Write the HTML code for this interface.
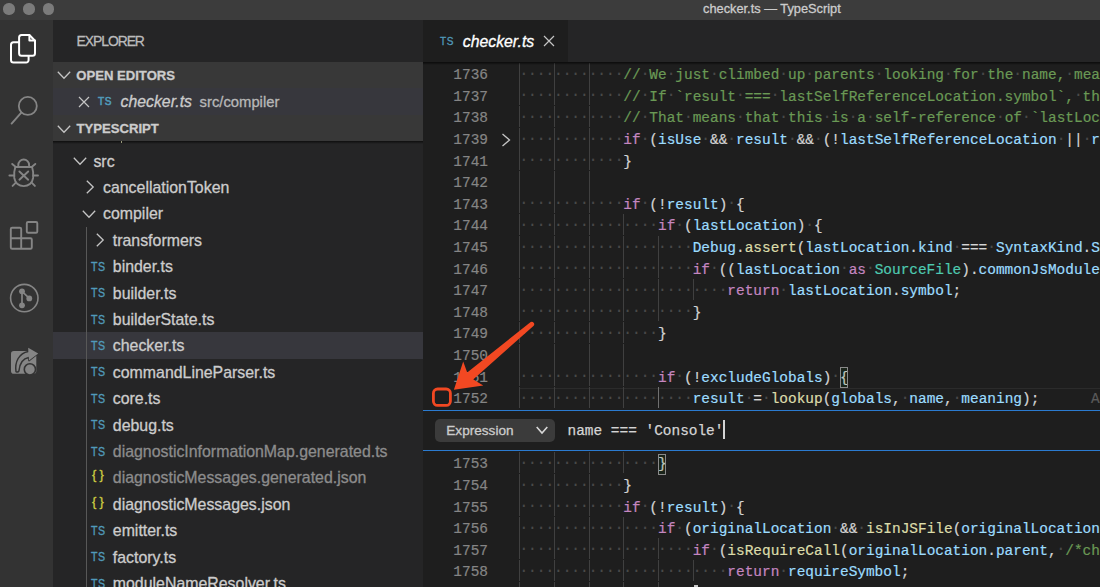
<!DOCTYPE html>
<html><head><meta charset="utf-8"><style>
*{box-sizing:border-box}
html,body{margin:0;padding:0}
body{width:1100px;height:587px;overflow:hidden;position:relative;background:#1e1e1e;font-family:"Liberation Sans",sans-serif}
.a{position:absolute}
.t{position:absolute;white-space:pre;line-height:1;-webkit-text-stroke:0.3px currentColor}
.code{position:absolute;white-space:pre;-webkit-text-stroke:0.2px currentColor;font-family:"Liberation Mono",monospace;font-size:14.45px;line-height:21.6px;height:21.6px;color:#d4d4d4}
.ln{position:absolute;white-space:pre;-webkit-text-stroke:0.2px currentColor;font-family:"Liberation Mono",monospace;font-size:14.45px;line-height:21.6px;color:#858585;text-align:right;width:60px}
.ws{color:#4a4a4a;position:relative;top:-1.4px}
.c{color:#6a9955}
.k{color:#c586c0}
.v{color:#9cdcfe}
.f{color:#dcdcaa}
.ty{color:#4ec9b0}
.p{color:#d4d4d4}
.g{position:absolute;width:1px;background:#404040}
</style></head><body>
<div class="a" style="left:0;top:0;width:1100px;height:20px;background:#3c3c3c"></div>
<div class="a" style="left:3.4px;top:3.4px;width:11.2px;height:11.2px;border-radius:50%;background:#7b7b7b"></div>
<div class="a" style="left:23.4px;top:3.4px;width:11.2px;height:11.2px;border-radius:50%;background:#7b7b7b"></div>
<div class="a" style="left:43.3px;top:3.4px;width:11.2px;height:11.2px;border-radius:50%;background:#7b7b7b"></div>
<div class="t" style="left:703px;top:3px;font-size:12.8px;color:#cccccc">checker.ts — TypeScript</div>
<div class="a" style="left:0;top:20px;width:53px;height:567px;background:#333333"></div>
<svg class="a" style="left:0;top:0" width="53" height="587" viewBox="0 0 53 587" fill="none" stroke-linejoin="round" stroke-linecap="round">
<!-- explorer -->
<path d="M19.1 37.5 a2.5 2.5 0 0 1 2.5-2.5 h7.8 l5.6 5.8 v12.5 a2.5 2.5 0 0 1 -2.5 2.5 h-10.9 a2.5 2.5 0 0 1 -2.5-2.5 z" stroke="#ffffff" stroke-width="2"/>
<path d="M29.4 35.2 v5.4 h5.5" stroke="#ffffff" stroke-width="2"/>
<path d="M19 42.3 h-5.5 a2.5 2.5 0 0 0 -2.5 2.5 v15.3 a2.5 2.5 0 0 0 2.5 2.5 h12.6 a2.5 2.5 0 0 0 2.5-2.5 v-4.2" stroke="#ffffff" stroke-width="2"/>
<!-- search -->
<circle cx="27.8" cy="105.9" r="9.0" stroke="#858585" stroke-width="1.8"/>
<path d="M21.3 112.6 L11.6 123.6" stroke="#858585" stroke-width="1.9"/>
<!-- debug -->
<path d="M18.3 166.8 V164.9 a5.4 5.4 0 0 1 10.8 0 V166.8" stroke="#858585" stroke-width="1.9"/>
<path d="M15.3 167 H32.1 C33.4 171 33.5 175 33.1 178 C32.3 183 28.6 186.1 23.7 186.1 C18.8 186.1 15.1 183 14.3 178 C13.9 175 14 171 15.3 167 Z" stroke="#858585" stroke-width="1.9"/>
<path d="M19.4 171.5 l8.8 8.2 M28.2 171.5 l-8.8 8.2" stroke="#858585" stroke-width="1.9"/>
<path d="M12.2 163.9 l3.6 3 M35.3 163.9 l-3.6 3 M9.4 175.5 h4.6 M33.4 175.5 h4.6 M12.6 185.9 l3.5 -3.5 M34.9 185.9 l-3.5 -3.5" stroke="#858585" stroke-width="1.9"/>
<!-- extensions -->
<path d="M10.8 238.2 V229 a1.3 1.3 0 0 1 1.3-1.3 h7.8 a1.3 1.3 0 0 1 1.3 1.3 V238.2 Z M10.8 238.2 h10.4 v10.6 h-9.1 a1.3 1.3 0 0 1 -1.3-1.3 Z M21.2 238.2 h9.3 a1.3 1.3 0 0 1 1.3 1.3 v8 a1.3 1.3 0 0 1 -1.3 1.3 h-9.3 Z" stroke="#858585" stroke-width="1.9"/>
<rect x="26.8" y="222" width="10.5" height="10.7" rx="1.3" stroke="#858585" stroke-width="1.9"/>
<!-- git -->
<circle cx="24.3" cy="298.1" r="13.7" stroke="#858585" stroke-width="1.6"/>
<path d="M22 291.3 V305.3 M22 291.3 L29.3 298.4" stroke="#858585" stroke-width="1.7"/>
<circle cx="22" cy="291.3" r="2.9" fill="#858585"/>
<circle cx="29.3" cy="298.4" r="2.9" fill="#858585"/>
<circle cx="22" cy="305.3" r="2.9" fill="#858585"/>
<!-- live share -->
<rect x="11" y="350.9" width="25.3" height="22.8" rx="2.8" fill="#858585"/>
<path d="M16.0 371.6 C14.6 362 19 353 28.3 351.4 L28.2 347.8 L38.2 353.4 L29 360.6 L28.8 357.6 C23 358.6 19.6 364 18.9 371 Q17.6 372.8 16.0 371.6 Z" fill="#858585" stroke="#333333" stroke-width="1.5" stroke-linejoin="round"/>
<path d="M28.2 347.8 L38.2 353.4 L29 360.6 L28.8 357.6 L28.3 351.4 Z" fill="#858585"/>
<circle cx="29.9" cy="369.4" r="5.6" fill="#858585" stroke="#333333" stroke-width="1.6"/>
</svg>
<div class="a" style="left:53px;top:20px;width:370px;height:567px;background:#252526"></div>
<div class="t" style="left:76.60px;top:35.33px;font-size:13.9px;color:#bbbbbb;letter-spacing:-1.05px">EXPLORER</div>
<div class="a" style="left:53px;top:62px;width:370px;height:79.2px;background:#383838"></div>
<div class="a" style="left:53px;top:88.4px;width:370px;height:26.4px;background:#37373d"></div>
<svg class="a" style="left:55.8px;top:67.4px" width="16" height="16" viewBox="0 0 16 16"><path d="M1.7999999999999998 4.8 L8 11.2 L14.2 4.8" fill="none" stroke="#c5c5c5" stroke-width="1.3"/></svg>
<div class="t" style="left:76.30px;top:68.91px;font-size:13.1px;color:#cccccc;font-weight:bold">OPEN EDITORS</div>
<svg class="a" style="left:78px;top:95.5px" width="12" height="12" viewBox="0 0 12 12"><path d="M1 1 L11 11 M11 1 L1 11" stroke="#c5c5c5" stroke-width="1.2"/></svg>
<div class="t" style="left:97.80px;top:95.89px;font-size:10.8px;color:#519aba;letter-spacing:0.6px;-webkit-text-stroke:0.6px #519aba;transform:scaleX(0.93);transform-origin:0 0">TS</div>
<div class="t" style="left:120.60px;top:93.93px;font-size:15.8px;color:#cccccc;font-style:italic">checker.ts</div>
<div class="t" style="left:199.60px;top:95.47px;font-size:14.8px;color:#b8b8b8;">src/compiler</div>
<svg class="a" style="left:55.8px;top:120.5px" width="16" height="16" viewBox="0 0 16 16"><path d="M1.7999999999999998 4.8 L8 11.2 L14.2 4.8" fill="none" stroke="#c5c5c5" stroke-width="1.3"/></svg>
<div class="t" style="left:76.60px;top:122.11px;font-size:13.1px;color:#cccccc;font-weight:bold">TYPESCRIPT</div>
<div class="a" style="left:53px;top:141.2px;width:370px;height:446px;overflow:hidden"><div class="a" style="left:-53px;top:-141.2px;width:423px;height:600px"><svg class="a" style="left:71.80000000000001px;top:153.4px" width="16" height="16" viewBox="0 0 16 16"><path d="M1.7999999999999998 4.8 L8 11.2 L14.2 4.8" fill="none" stroke="#c5c5c5" stroke-width="1.3"/></svg>
<div class="t" style="left:93.40px;top:153.54px;font-size:15.9px;color:#cccccc;">src</div>
<svg class="a" style="left:82.1px;top:179.0px" width="16" height="16" viewBox="0 0 16 16"><path d="M4.8 1.7999999999999998 L11.2 8 L4.8 14.2" fill="none" stroke="#c5c5c5" stroke-width="1.3"/></svg>
<div class="t" style="left:103.00px;top:179.94px;font-size:15.9px;color:#cccccc;">cancellationToken</div>
<svg class="a" style="left:81.4px;top:206.2px" width="16" height="16" viewBox="0 0 16 16"><path d="M1.7999999999999998 4.8 L8 11.2 L14.2 4.8" fill="none" stroke="#c5c5c5" stroke-width="1.3"/></svg>
<div class="t" style="left:103.00px;top:206.34px;font-size:15.9px;color:#cccccc;">compiler</div>
<svg class="a" style="left:91.89999999999999px;top:231.79999999999998px" width="16" height="16" viewBox="0 0 16 16"><path d="M4.8 1.7999999999999998 L11.2 8 L4.8 14.2" fill="none" stroke="#c5c5c5" stroke-width="1.3"/></svg>
<div class="t" style="left:112.80px;top:232.74px;font-size:15.9px;color:#cccccc;">transformers</div>
<div class="t" style="left:91.40px;top:260.87px;font-size:12.5px;color:#519aba;letter-spacing:0.6px;-webkit-text-stroke:0.35px #519aba;transform:scaleX(0.85);transform-origin:0 0">TS</div>
<div class="t" style="left:112.80px;top:259.14px;font-size:15.9px;color:#cccccc;">binder.ts</div>
<div class="t" style="left:91.40px;top:287.27px;font-size:12.5px;color:#519aba;letter-spacing:0.6px;-webkit-text-stroke:0.35px #519aba;transform:scaleX(0.85);transform-origin:0 0">TS</div>
<div class="t" style="left:112.80px;top:285.54px;font-size:15.9px;color:#cccccc;">builder.ts</div>
<div class="t" style="left:91.40px;top:313.67px;font-size:12.5px;color:#519aba;letter-spacing:0.6px;-webkit-text-stroke:0.35px #519aba;transform:scaleX(0.85);transform-origin:0 0">TS</div>
<div class="t" style="left:112.80px;top:311.94px;font-size:15.9px;color:#cccccc;">builderState.ts</div>
<div class="a" style="left:53px;top:332.40px;width:370px;height:26.4px;background:#37373d"></div>
<div class="t" style="left:91.40px;top:340.07px;font-size:12.5px;color:#519aba;letter-spacing:0.6px;-webkit-text-stroke:0.35px #519aba;transform:scaleX(0.85);transform-origin:0 0">TS</div>
<div class="t" style="left:112.80px;top:338.34px;font-size:15.9px;color:#cccccc;">checker.ts</div>
<div class="t" style="left:91.40px;top:366.47px;font-size:12.5px;color:#519aba;letter-spacing:0.6px;-webkit-text-stroke:0.35px #519aba;transform:scaleX(0.85);transform-origin:0 0">TS</div>
<div class="t" style="left:112.80px;top:364.74px;font-size:15.9px;color:#cccccc;">commandLineParser.ts</div>
<div class="t" style="left:91.40px;top:392.87px;font-size:12.5px;color:#519aba;letter-spacing:0.6px;-webkit-text-stroke:0.35px #519aba;transform:scaleX(0.85);transform-origin:0 0">TS</div>
<div class="t" style="left:112.80px;top:391.14px;font-size:15.9px;color:#cccccc;">core.ts</div>
<div class="t" style="left:91.40px;top:419.27px;font-size:12.5px;color:#519aba;letter-spacing:0.6px;-webkit-text-stroke:0.35px #519aba;transform:scaleX(0.85);transform-origin:0 0">TS</div>
<div class="t" style="left:112.80px;top:417.54px;font-size:15.9px;color:#cccccc;">debug.ts</div>
<div class="t" style="left:91.40px;top:445.67px;font-size:12.5px;color:#519aba;letter-spacing:0.6px;-webkit-text-stroke:0.35px #519aba;transform:scaleX(0.85);transform-origin:0 0">TS</div>
<div class="t" style="left:112.80px;top:443.94px;font-size:15.9px;color:#8c8c8c;">diagnosticInformationMap.generated.ts</div>
<div class="t" style="left:91.9px;top:469.4px;font-size:12.8px;color:#cbcb41;letter-spacing:3.3px;-webkit-text-stroke:0.35px #cbcb41">{}</div>
<div class="t" style="left:112.80px;top:470.34px;font-size:15.9px;color:#8c8c8c;">diagnosticMessages.generated.json</div>
<div class="t" style="left:91.9px;top:495.79999999999995px;font-size:12.8px;color:#cbcb41;letter-spacing:3.3px;-webkit-text-stroke:0.35px #cbcb41">{}</div>
<div class="t" style="left:112.80px;top:496.74px;font-size:15.9px;color:#cccccc;">diagnosticMessages.json</div>
<div class="t" style="left:91.40px;top:524.87px;font-size:12.5px;color:#519aba;letter-spacing:0.6px;-webkit-text-stroke:0.35px #519aba;transform:scaleX(0.85);transform-origin:0 0">TS</div>
<div class="t" style="left:112.80px;top:523.14px;font-size:15.9px;color:#cccccc;">emitter.ts</div>
<div class="t" style="left:91.40px;top:551.27px;font-size:12.5px;color:#519aba;letter-spacing:0.6px;-webkit-text-stroke:0.35px #519aba;transform:scaleX(0.85);transform-origin:0 0">TS</div>
<div class="t" style="left:112.80px;top:549.54px;font-size:15.9px;color:#cccccc;">factory.ts</div>
<div class="t" style="left:91.40px;top:577.67px;font-size:12.5px;color:#519aba;letter-spacing:0.6px;-webkit-text-stroke:0.35px #519aba;transform:scaleX(0.85);transform-origin:0 0">TS</div>
<div class="t" style="left:112.80px;top:575.94px;font-size:15.9px;color:#cccccc;">moduleNameResolver.ts</div>
<div class="a" style="left:86px;top:226.8px;width:1px;height:370px;background:#585858"></div></div></div>
<div class="a" style="left:53px;top:141.2px;width:370px;height:3px;background:linear-gradient(#000000a0,#00000000)"></div>
<div class="a" style="left:120.8px;top:141.3px;width:1.2px;height:1.6px;background:#9a9a7a"></div>
<div class="a" style="left:423px;top:20px;width:677px;height:42px;background:#252526"></div>
<div class="a" style="left:423px;top:20px;width:145px;height:42px;background:#1e1e1e"></div>
<div class="t" style="left:440.20px;top:36.06px;font-size:11.8px;color:#519aba;letter-spacing:0.6px;-webkit-text-stroke:0.35px #519aba;transform:scaleX(0.85);transform-origin:0 0">TS</div>
<div class="t" style="left:462.80px;top:34.13px;font-size:15.8px;color:#ffffff;font-style:italic">checker.ts</div>
<svg class="a" style="left:542.5px;top:34.5px" width="12" height="12" viewBox="0 0 12 12"><path d="M1 1 L11 11 M11 1 L1 11" stroke="#c5c5c5" stroke-width="1.2"/></svg>
<div class="a" style="left:423px;top:62px;width:677px;height:525px;background:#1e1e1e;overflow:hidden">
<div class="a" style="left:-423px;top:-62px;width:1100px;height:587px">
<div class="a" style="left:519px;top:387.80px;width:600px;height:21.4px;border-top:1.6px solid #2b2b2b;border-bottom:1.6px solid #2b2b2b"></div>
<div class="ln" style="left:428px;top:65.10px">1736</div>
<div class="g" style="left:519.40px;top:62.80px;height:21.00px;background:#404040"></div>
<div class="g" style="left:554.08px;top:62.80px;height:21.00px;background:#404040"></div>
<div class="g" style="left:588.76px;top:62.80px;height:21.00px;background:#404040"></div>
<div class="code" style="left:519.4px;top:65.10px"><span class="ws">············</span><span class="c">//</span><span class="ws">·</span><span class="c">We</span><span class="ws">·</span><span class="c">just</span><span class="ws">·</span><span class="c">climbed</span><span class="ws">·</span><span class="c">up</span><span class="ws">·</span><span class="c">parents</span><span class="ws">·</span><span class="c">looking</span><span class="ws">·</span><span class="c">for</span><span class="ws">·</span><span class="c">the</span><span class="ws">·</span><span class="c">name,</span><span class="ws">·</span><span class="c">meaning,</span><span class="ws">·</span><span class="c">and</span><span class="ws">·</span><span class="c">namespace</span></div>
<div class="ln" style="left:428px;top:86.70px">1737</div>
<div class="g" style="left:519.40px;top:84.40px;height:21.00px;background:#404040"></div>
<div class="g" style="left:554.08px;top:84.40px;height:21.00px;background:#404040"></div>
<div class="g" style="left:588.76px;top:84.40px;height:21.00px;background:#404040"></div>
<div class="code" style="left:519.4px;top:86.70px"><span class="ws">············</span><span class="c">//</span><span class="ws">·</span><span class="c">If</span><span class="ws">·</span><span class="c">`result</span><span class="ws">·</span><span class="c">===</span><span class="ws">·</span><span class="c">lastSelfReferenceLocation.symbol`,</span><span class="ws">·</span><span class="c">that</span><span class="ws">·</span><span class="c">means</span><span class="ws">·</span><span class="c">that</span><span class="ws">·</span><span class="c">we</span><span class="ws">·</span><span class="c">are</span><span class="ws">·</span><span class="c">somewhere</span><span class="ws">·</span><span class="c">inside</span></div>
<div class="ln" style="left:428px;top:108.30px">1738</div>
<div class="g" style="left:519.40px;top:106.00px;height:21.00px;background:#404040"></div>
<div class="g" style="left:554.08px;top:106.00px;height:21.00px;background:#404040"></div>
<div class="g" style="left:588.76px;top:106.00px;height:21.00px;background:#404040"></div>
<div class="code" style="left:519.4px;top:108.30px"><span class="ws">············</span><span class="c">//</span><span class="ws">·</span><span class="c">That</span><span class="ws">·</span><span class="c">means</span><span class="ws">·</span><span class="c">that</span><span class="ws">·</span><span class="c">this</span><span class="ws">·</span><span class="c">is</span><span class="ws">·</span><span class="c">a</span><span class="ws">·</span><span class="c">self-reference</span><span class="ws">·</span><span class="c">of</span><span class="ws">·</span><span class="c">`lastLocation`,</span><span class="ws">·</span><span class="c">and</span><span class="ws">·</span><span class="c">shouldn&#x27;t</span><span class="ws">·</span><span class="c">count</span><span class="ws">·</span><span class="c">this</span></div>
<div class="ln" style="left:428px;top:129.90px">1739</div>
<div class="g" style="left:519.40px;top:127.60px;height:21.00px;background:#404040"></div>
<div class="g" style="left:554.08px;top:127.60px;height:21.00px;background:#404040"></div>
<div class="g" style="left:588.76px;top:127.60px;height:21.00px;background:#404040"></div>
<div class="code" style="left:519.4px;top:129.90px"><span class="ws">············</span><span class="k">if</span><span class="ws">·</span><span class="p">(</span><span class="v">isUse</span><span class="ws">·</span><span class="p">&amp;&amp;</span><span class="ws">·</span><span class="v">result</span><span class="ws">·</span><span class="p">&amp;&amp;</span><span class="ws">·</span><span class="p">(!</span><span class="v">lastSelfReferenceLocation</span><span class="ws">·</span><span class="p">||</span><span class="ws">·</span><span class="v">result</span><span class="ws">·</span><span class="p">!==</span><span class="ws">·</span></div>
<div class="ln" style="left:428px;top:151.50px">1741</div>
<div class="g" style="left:519.40px;top:149.20px;height:21.00px;background:#404040"></div>
<div class="g" style="left:554.08px;top:149.20px;height:21.00px;background:#404040"></div>
<div class="g" style="left:588.76px;top:149.20px;height:21.00px;background:#404040"></div>
<div class="code" style="left:519.4px;top:151.50px"><span class="ws">············</span><span class="p">}</span></div>
<div class="ln" style="left:428px;top:173.10px">1742</div>
<div class="g" style="left:519.40px;top:170.80px;height:21.00px;background:#404040"></div>
<div class="g" style="left:554.08px;top:170.80px;height:21.00px;background:#404040"></div>
<div class="g" style="left:588.76px;top:170.80px;height:21.00px;background:#404040"></div>
<div class="code" style="left:519.4px;top:173.10px"></div>
<div class="ln" style="left:428px;top:194.70px">1743</div>
<div class="g" style="left:519.40px;top:192.40px;height:21.00px;background:#404040"></div>
<div class="g" style="left:554.08px;top:192.40px;height:21.00px;background:#404040"></div>
<div class="g" style="left:588.76px;top:192.40px;height:21.00px;background:#404040"></div>
<div class="code" style="left:519.4px;top:194.70px"><span class="ws">············</span><span class="k">if</span><span class="ws">·</span><span class="p">(!</span><span class="v">result</span><span class="p">)</span><span class="ws">·</span><span class="p">{</span></div>
<div class="ln" style="left:428px;top:216.30px">1744</div>
<div class="g" style="left:519.40px;top:214.00px;height:21.00px;background:#404040"></div>
<div class="g" style="left:554.08px;top:214.00px;height:21.00px;background:#404040"></div>
<div class="g" style="left:588.76px;top:214.00px;height:21.00px;background:#404040"></div>
<div class="g" style="left:623.44px;top:214.00px;height:21.00px;background:#404040"></div>
<div class="code" style="left:519.4px;top:216.30px"><span class="ws">················</span><span class="k">if</span><span class="ws">·</span><span class="p">(</span><span class="v">lastLocation</span><span class="p">)</span><span class="ws">·</span><span class="p">{</span></div>
<div class="ln" style="left:428px;top:237.90px">1745</div>
<div class="g" style="left:519.40px;top:235.60px;height:21.00px;background:#404040"></div>
<div class="g" style="left:554.08px;top:235.60px;height:21.00px;background:#404040"></div>
<div class="g" style="left:588.76px;top:235.60px;height:21.00px;background:#404040"></div>
<div class="g" style="left:623.44px;top:235.60px;height:21.00px;background:#404040"></div>
<div class="g" style="left:658.12px;top:235.60px;height:21.00px;background:#404040"></div>
<div class="code" style="left:519.4px;top:237.90px"><span class="ws">····················</span><span class="v">Debug</span><span class="p">.</span><span class="f">assert</span><span class="p">(</span><span class="v">lastLocation</span><span class="p">.</span><span class="v">kind</span><span class="ws">·</span><span class="p">===</span><span class="ws">·</span><span class="v">SyntaxKind</span><span class="p">.</span><span class="v">SourceFile</span></div>
<div class="ln" style="left:428px;top:259.50px">1746</div>
<div class="g" style="left:519.40px;top:257.20px;height:21.00px;background:#404040"></div>
<div class="g" style="left:554.08px;top:257.20px;height:21.00px;background:#404040"></div>
<div class="g" style="left:588.76px;top:257.20px;height:21.00px;background:#404040"></div>
<div class="g" style="left:623.44px;top:257.20px;height:21.00px;background:#404040"></div>
<div class="g" style="left:658.12px;top:257.20px;height:21.00px;background:#404040"></div>
<div class="code" style="left:519.4px;top:259.50px"><span class="ws">····················</span><span class="k">if</span><span class="ws">·</span><span class="p">((</span><span class="v">lastLocation</span><span class="ws">·</span><span class="k">as</span><span class="ws">·</span><span class="ty">SourceFile</span><span class="p">).</span><span class="v">commonJsModuleIndicator</span></div>
<div class="ln" style="left:428px;top:281.10px">1747</div>
<div class="g" style="left:519.40px;top:278.80px;height:21.00px;background:#404040"></div>
<div class="g" style="left:554.08px;top:278.80px;height:21.00px;background:#404040"></div>
<div class="g" style="left:588.76px;top:278.80px;height:21.00px;background:#404040"></div>
<div class="g" style="left:623.44px;top:278.80px;height:21.00px;background:#404040"></div>
<div class="g" style="left:658.12px;top:278.80px;height:21.00px;background:#404040"></div>
<div class="g" style="left:692.80px;top:278.80px;height:21.00px;background:#404040"></div>
<div class="code" style="left:519.4px;top:281.10px"><span class="ws">························</span><span class="k">return</span><span class="ws">·</span><span class="v">lastLocation</span><span class="p">.</span><span class="v">symbol</span><span class="p">;</span></div>
<div class="ln" style="left:428px;top:302.70px">1748</div>
<div class="g" style="left:519.40px;top:300.40px;height:21.00px;background:#404040"></div>
<div class="g" style="left:554.08px;top:300.40px;height:21.00px;background:#404040"></div>
<div class="g" style="left:588.76px;top:300.40px;height:21.00px;background:#404040"></div>
<div class="g" style="left:623.44px;top:300.40px;height:21.00px;background:#404040"></div>
<div class="g" style="left:658.12px;top:300.40px;height:21.00px;background:#404040"></div>
<div class="code" style="left:519.4px;top:302.70px"><span class="ws">····················</span><span class="p">}</span></div>
<div class="ln" style="left:428px;top:324.30px">1749</div>
<div class="g" style="left:519.40px;top:322.00px;height:21.00px;background:#404040"></div>
<div class="g" style="left:554.08px;top:322.00px;height:21.00px;background:#404040"></div>
<div class="g" style="left:588.76px;top:322.00px;height:21.00px;background:#404040"></div>
<div class="g" style="left:623.44px;top:322.00px;height:21.00px;background:#404040"></div>
<div class="code" style="left:519.4px;top:324.30px"><span class="ws">················</span><span class="p">}</span></div>
<div class="ln" style="left:428px;top:345.90px">1750</div>
<div class="g" style="left:519.40px;top:343.60px;height:21.00px;background:#404040"></div>
<div class="g" style="left:554.08px;top:343.60px;height:21.00px;background:#404040"></div>
<div class="g" style="left:588.76px;top:343.60px;height:21.00px;background:#404040"></div>
<div class="g" style="left:623.44px;top:343.60px;height:21.00px;background:#404040"></div>
<div class="code" style="left:519.4px;top:345.90px"></div>
<div class="ln" style="left:428px;top:367.50px">1751</div>
<div class="g" style="left:519.40px;top:365.20px;height:21.00px;background:#404040"></div>
<div class="g" style="left:554.08px;top:365.20px;height:21.00px;background:#404040"></div>
<div class="g" style="left:588.76px;top:365.20px;height:21.00px;background:#404040"></div>
<div class="g" style="left:623.44px;top:365.20px;height:21.00px;background:#404040"></div>
<div class="code" style="left:519.4px;top:367.50px"><span class="ws">················</span><span class="k">if</span><span class="ws">·</span><span class="p">(!</span><span class="v">excludeGlobals</span><span class="p">)</span><span class="ws">·</span><span class="bm">{</span></div>
<div class="ln" style="left:428px;top:389.10px">1752</div>
<div class="g" style="left:519.40px;top:386.80px;height:21.00px;background:#404040"></div>
<div class="g" style="left:554.08px;top:386.80px;height:21.00px;background:#404040"></div>
<div class="g" style="left:588.76px;top:386.80px;height:21.00px;background:#404040"></div>
<div class="g" style="left:623.44px;top:386.80px;height:21.00px;background:#404040"></div>
<div class="g" style="left:658.12px;top:386.80px;height:21.00px;background:#707070"></div>
<div class="code" style="left:519.4px;top:389.10px"><span class="ws">····················</span><span class="v">result</span><span class="ws">·</span><span class="p">=</span><span class="ws">·</span><span class="f">lookup</span><span class="p">(</span><span class="v">globals</span><span class="p">,</span><span class="ws">·</span><span class="v">name</span><span class="p">,</span><span class="ws">·</span><span class="v">meaning</span><span class="p">);</span></div>
<div class="ln" style="left:428px;top:454.30px">1753</div>
<div class="g" style="left:519.40px;top:452.00px;height:21.00px;background:#404040"></div>
<div class="g" style="left:554.08px;top:452.00px;height:21.00px;background:#404040"></div>
<div class="g" style="left:588.76px;top:452.00px;height:21.00px;background:#404040"></div>
<div class="g" style="left:623.44px;top:452.00px;height:21.00px;background:#404040"></div>
<div class="code" style="left:519.4px;top:454.30px"><span class="ws">················</span><span class="bm">}</span></div>
<div class="ln" style="left:428px;top:475.90px">1754</div>
<div class="g" style="left:519.40px;top:473.60px;height:21.00px;background:#404040"></div>
<div class="g" style="left:554.08px;top:473.60px;height:21.00px;background:#404040"></div>
<div class="g" style="left:588.76px;top:473.60px;height:21.00px;background:#404040"></div>
<div class="code" style="left:519.4px;top:475.90px"><span class="ws">············</span><span class="p">}</span></div>
<div class="ln" style="left:428px;top:497.50px">1755</div>
<div class="g" style="left:519.40px;top:495.20px;height:21.00px;background:#404040"></div>
<div class="g" style="left:554.08px;top:495.20px;height:21.00px;background:#404040"></div>
<div class="g" style="left:588.76px;top:495.20px;height:21.00px;background:#404040"></div>
<div class="code" style="left:519.4px;top:497.50px"><span class="ws">············</span><span class="k">if</span><span class="ws">·</span><span class="p">(!</span><span class="v">result</span><span class="p">)</span><span class="ws">·</span><span class="p">{</span></div>
<div class="ln" style="left:428px;top:519.10px">1756</div>
<div class="g" style="left:519.40px;top:516.80px;height:21.00px;background:#404040"></div>
<div class="g" style="left:554.08px;top:516.80px;height:21.00px;background:#404040"></div>
<div class="g" style="left:588.76px;top:516.80px;height:21.00px;background:#404040"></div>
<div class="g" style="left:623.44px;top:516.80px;height:21.00px;background:#404040"></div>
<div class="code" style="left:519.4px;top:519.10px"><span class="ws">················</span><span class="k">if</span><span class="ws">·</span><span class="p">(</span><span class="v">originalLocation</span><span class="ws">·</span><span class="p">&amp;&amp;</span><span class="ws">·</span><span class="f">isInJSFile</span><span class="p">(</span><span class="v">originalLocation</span><span class="p">)</span></div>
<div class="ln" style="left:428px;top:540.70px">1757</div>
<div class="g" style="left:519.40px;top:538.40px;height:21.00px;background:#404040"></div>
<div class="g" style="left:554.08px;top:538.40px;height:21.00px;background:#404040"></div>
<div class="g" style="left:588.76px;top:538.40px;height:21.00px;background:#404040"></div>
<div class="g" style="left:623.44px;top:538.40px;height:21.00px;background:#404040"></div>
<div class="g" style="left:658.12px;top:538.40px;height:21.00px;background:#404040"></div>
<div class="code" style="left:519.4px;top:540.70px"><span class="ws">····················</span><span class="k">if</span><span class="ws">·</span><span class="p">(</span><span class="f">isRequireCall</span><span class="p">(</span><span class="v">originalLocation</span><span class="p">.</span><span class="v">parent</span><span class="p">,</span><span class="ws">·</span><span class="c">/*checkArgumentIsStringLiteralLike*/</span></div>
<div class="ln" style="left:428px;top:562.30px">1758</div>
<div class="g" style="left:519.40px;top:560.00px;height:21.00px;background:#404040"></div>
<div class="g" style="left:554.08px;top:560.00px;height:21.00px;background:#404040"></div>
<div class="g" style="left:588.76px;top:560.00px;height:21.00px;background:#404040"></div>
<div class="g" style="left:623.44px;top:560.00px;height:21.00px;background:#404040"></div>
<div class="g" style="left:658.12px;top:560.00px;height:21.00px;background:#404040"></div>
<div class="g" style="left:692.80px;top:560.00px;height:21.00px;background:#404040"></div>
<div class="code" style="left:519.4px;top:562.30px"><span class="ws">························</span><span class="k">return</span><span class="ws">·</span><span class="v">requireSymbol</span><span class="p">;</span></div>
<div class="ln" style="left:428px;top:583.90px">1759</div>
<div class="g" style="left:519.40px;top:581.60px;height:21.00px;background:#404040"></div>
<div class="g" style="left:554.08px;top:581.60px;height:21.00px;background:#404040"></div>
<div class="g" style="left:588.76px;top:581.60px;height:21.00px;background:#404040"></div>
<div class="g" style="left:623.44px;top:581.60px;height:21.00px;background:#404040"></div>
<div class="g" style="left:658.12px;top:581.60px;height:21.00px;background:#404040"></div>
<div class="code" style="left:519.4px;top:583.90px"><span class="ws">····················</span><span class="p">}</span></div>
<div class="a" style="left:840.19px;top:367.00px;width:8px;height:20.8px;border:1px solid #8a8a8a;background:#0064001a"></div>
<div class="a" style="left:658.12px;top:453.80px;width:8px;height:20.8px;border:1px solid #8a8a8a;background:#0064001a"></div>
<svg class="a" style="left:498.0px;top:132.0px" width="16" height="16" viewBox="0 0 16 16"><path d="M4.5 2.0 L11.5 8 L4.5 14.0" fill="none" stroke="#c5c5c5" stroke-width="1.3"/></svg>
<div class="a" style="left:694px;top:585px;width:4px;height:2px;background:#c8c8c8"></div>
<div class="code" style="left:1091px;top:389.10px;color:#5a5a5a">A</div>
</div></div>
<div class="a" style="left:423px;top:62px;width:677px;height:3px;background:linear-gradient(#000000a8,#00000000)"></div>
<div class="a" style="left:423px;top:408.4px;width:677px;height:43.6px;background:#1e1e1e"></div>
<div class="a" style="left:423px;top:409.9px;width:677px;height:1px;background:#2b7bd0"></div>
<div class="a" style="left:423px;top:449.9px;width:677px;height:1px;background:#2b7bd0"></div>
<div class="a" style="left:435.3px;top:419.1px;width:119.9px;height:22.8px;border-radius:5px;background:#3b3b3b"></div>
<div class="t" style="left:446.30px;top:423.69px;font-size:13.6px;color:#cccccc;">Expression</div>
<svg class="a" style="left:534.1px;top:421.8px" width="16" height="16" viewBox="0 0 16 16"><path d="M2.7 5.0 L8 11.0 L13.3 5.0" fill="none" stroke="#d8d8d8" stroke-width="1.6"/></svg>
<div class="a" style="left:567.5px;top:421px;white-space:pre;font-family:'Liberation Mono',monospace;font-size:14.45px;line-height:21.6px;color:#d4d4d4;-webkit-text-stroke:0.25px #d4d4d4">name === 'Console'</div>
<div class="a" style="left:723px;top:420px;width:1.5px;height:19px;background:#d4d4d4"></div>
<svg class="a" style="left:0;top:0" width="1100" height="587" viewBox="0 0 1100 587">
<path d="M453.9 389.7 L483.3 385.4 L473.2 379.5 L533.7 325.7 A2.4 2.4 0 0 0 530.7 322.1 L467.2 372.5 L463.2 361.5 Z" fill="#f24822"/>
<rect x="433.4" y="389.0" width="17" height="16.4" rx="4.2" ry="4.2" fill="none" stroke="#f24822" stroke-width="2.8"/>
</svg>
</body></html>
